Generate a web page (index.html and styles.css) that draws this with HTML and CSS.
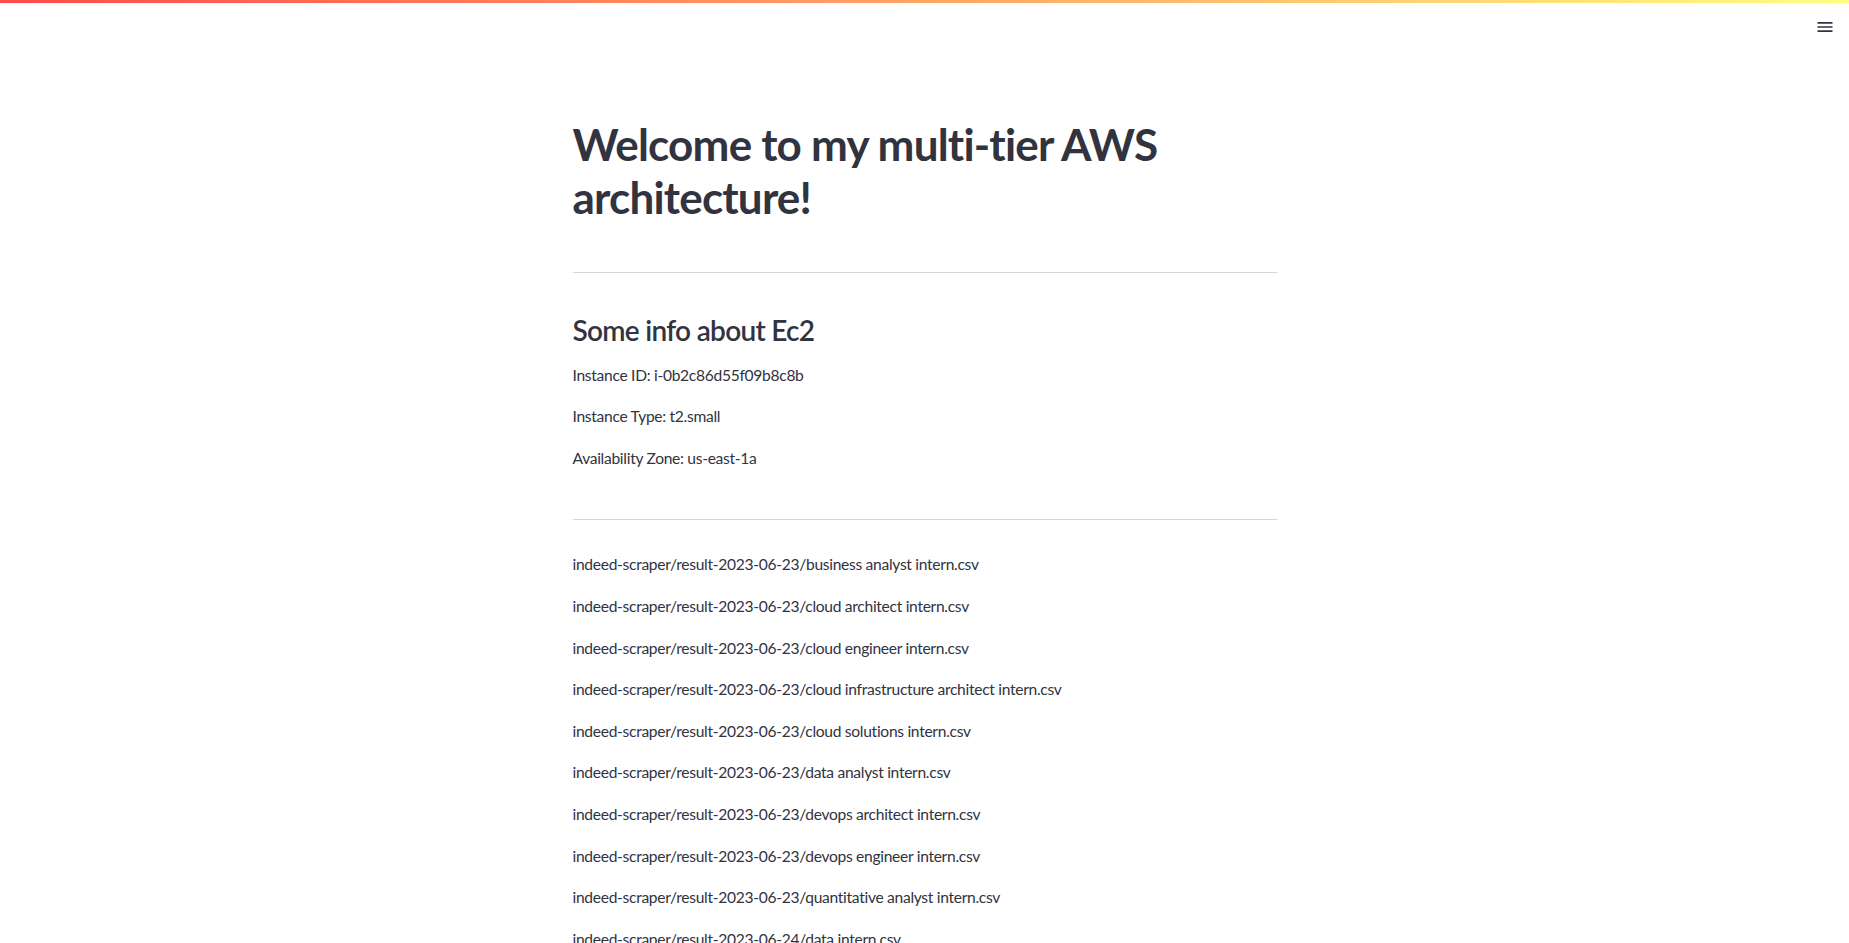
FILE: index.html
```html
<!DOCTYPE html>
<html lang="en">
<head>
<meta charset="utf-8">
<title>Multi-tier AWS architecture</title>
<link rel="stylesheet" href="styles.css">
</head>
<body>
<header class="app-header">
  <div class="decoration"></div>
  <div class="toolbar">
    <button class="menu-btn" aria-label="Main menu">
      <svg viewBox="0 0 24 24" width="20" height="20" aria-hidden="true"><path fill="currentColor" d="M3 18h18v-2H3v2zm0-5h18v-2H3v2zm0-7v2h18V6H3z"/></svg>
    </button>
  </div>
</header>
<main class="block">
  <h1 class="title">Welcome to my multi-tier AWS architecture!</h1>
  <hr class="divider divider-first">
  <h3 class="subheader">Some info about Ec2</h3>
  <div class="info">
    <p>Instance ID: i-0b2c86d55f09b8c8b</p>
    <p>Instance Type: t2.small</p>
    <p>Availability Zone: us-east-1a</p>
  </div>
  <hr class="divider divider-second">
  <div class="files">
    <p>indeed-scraper/result-2023-06-23/business analyst intern.csv</p>
    <p>indeed-scraper/result-2023-06-23/cloud architect intern.csv</p>
    <p>indeed-scraper/result-2023-06-23/cloud engineer intern.csv</p>
    <p>indeed-scraper/result-2023-06-23/cloud infrastructure architect intern.csv</p>
    <p>indeed-scraper/result-2023-06-23/cloud solutions intern.csv</p>
    <p>indeed-scraper/result-2023-06-23/data analyst intern.csv</p>
    <p>indeed-scraper/result-2023-06-23/devops architect intern.csv</p>
    <p>indeed-scraper/result-2023-06-23/devops engineer intern.csv</p>
    <p>indeed-scraper/result-2023-06-23/quantitative analyst intern.csv</p>
    <p>indeed-scraper/result-2023-06-24/data intern.csv</p>
  </div>
</main>
</body>
</html>
```

FILE: styles.css
```css
html, body {
  margin: 0;
  padding: 0;
  background: #ffffff;
}

body {
  font-family: "Source Sans Pro", "Lato", "Noto Sans", sans-serif;
  color: #31333f;
  font-size: 16px;
  line-height: 1.6;
}

.app-header {
  height: 46px;
  display: flex;
  flex-direction: column;
}

.decoration {
  height: 3px;
  background: linear-gradient(90deg, rgb(255, 75, 75), rgb(255, 253, 128));
}

.toolbar {
  display: flex;
  justify-content: flex-end;
  padding: 14px 14px 0 0;
}

.menu-btn {
  border: none;
  background: none;
  padding: 0;
  margin: 0;
  width: 20px;
  height: 20px;
  color: #31333f;
  display: block;
}

.menu-btn svg {
  display: block;
}

.block {
  width: 704px;
  margin: 0 auto;
  padding: 50px 0 160px;
  display: flex;
  flex-direction: column;
}

.title {
  margin: 0;
  padding-top: 22.4px;
  font-size: 44px;
  line-height: 1.2;
  font-weight: 700;
  letter-spacing: -0.8px;
}

.divider {
  border: none;
  border-bottom: 1px solid rgba(49, 51, 63, 0.2);
  padding: 0;
  height: 0;
  width: 100%;
}

.divider-first {
  margin: 47.6px 0 41.5px;
}

.divider-second {
  margin: 48px 0 32px;
}

.subheader {
  margin: 0 0 15px;
  font-size: 28px;
  line-height: 1.2;
  font-weight: 600;
  letter-spacing: -0.7px;
}

.info, .files {
  display: flex;
  flex-direction: column;
  gap: 16px;
}

.info p, .files p {
  margin: 0;
  font-size: 15.6px;
  line-height: 25.6px;
  letter-spacing: -0.3px;
}
```
